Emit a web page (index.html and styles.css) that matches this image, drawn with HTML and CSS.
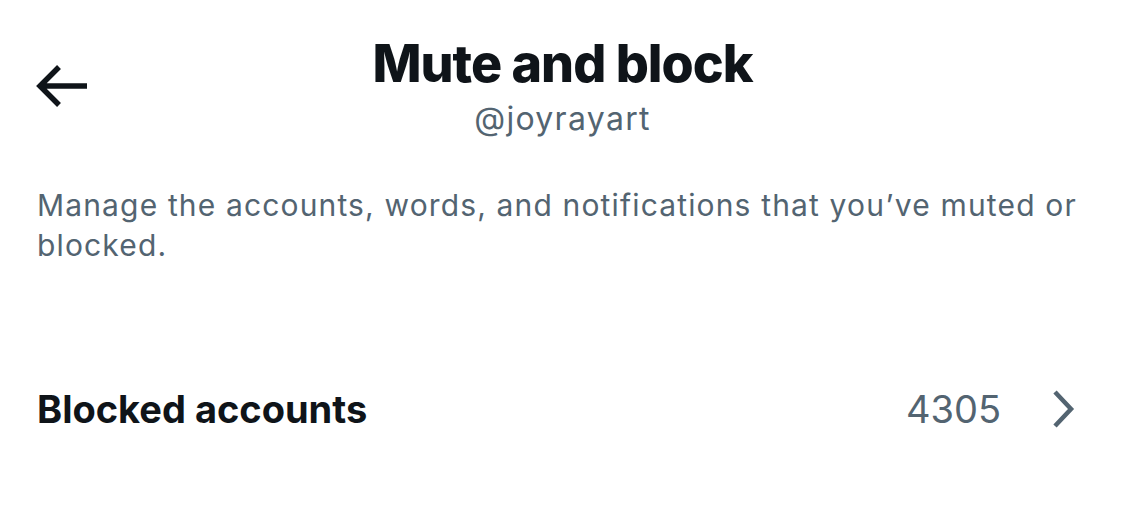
FILE: index.html
```html
<!DOCTYPE html>
<html>
<head>
<meta charset="utf-8">
<link rel="stylesheet" href="styles.css">
</head>
<body>
<div class="page">
  <header class="header">
    <button class="back" aria-label="Back">
      <svg viewBox="0 0 54 44" width="54" height="44">
        <path d="M24 3 L5 22 L24 41 M5 22 H52" fill="none" stroke="#0f1419" stroke-width="5.5" stroke-linejoin="miter"/>
      </svg>
    </button>
    <div class="titles">
      <h1 class="title">Mute and block</h1>
      <div class="handle">@joyrayart</div>
    </div>
  </header>
  <p class="desc">Manage the accounts, words, and notifications that you’ve muted or blocked.</p>
  <div class="row">
    <span class="row-label">Blocked accounts</span>
    <span class="row-right">
      <span class="count">4305</span>
      <svg class="chev" viewBox="0 0 24 38" width="24" height="38">
        <path d="M4 2 L20 19 L4 36" fill="none" stroke="#536471" stroke-width="4.5"/>
      </svg>
    </span>
  </div>
</div>
</body>
</html>
```
FILE: styles.css
```css
html, body {
  margin: 0;
  padding: 0;
  background: #ffffff;
}
body {
  font-family: Inter, "Noto Sans", sans-serif;
  color: #0f1419;
}
.page {
  width: 1125px;
  height: 524px;
  padding: 0 37px;
  box-sizing: border-box;
  overflow: hidden;
}
.header {
  position: relative;
  display: flex;
  justify-content: center;
  padding-top: 36px;
}
.back {
  position: absolute;
  left: -2px;
  top: 64px;
  border: 0;
  background: none;
  padding: 0;
  display: flex;
}
.titles {
  display: flex;
  flex-direction: column;
  align-items: center;
}
.title {
  margin: 0;
  font-size: 52px;
  font-weight: 800;
  line-height: 56px;
  letter-spacing: -1px;
}
.handle {
  font-size: 32px;
  line-height: 40px;
  letter-spacing: 1.3px;
  color: #536471;
  margin-top: 7px;
}
.desc {
  margin: 46px 0 0 0;
  font-size: 30px;
  line-height: 40px;
  letter-spacing: 1.15px;
  color: #536471;
}
.row {
  display: flex;
  justify-content: space-between;
  align-items: center;
  margin-top: 121px;
  line-height: 46px;
}
.row-label {
  font-size: 38px;
  font-weight: 700;
}
.row-right {
  display: flex;
  align-items: center;
  gap: 50px;
}
.count {
  font-size: 38px;
  color: #536471;
}
.chev {
  margin-right: 13px;
}
```
